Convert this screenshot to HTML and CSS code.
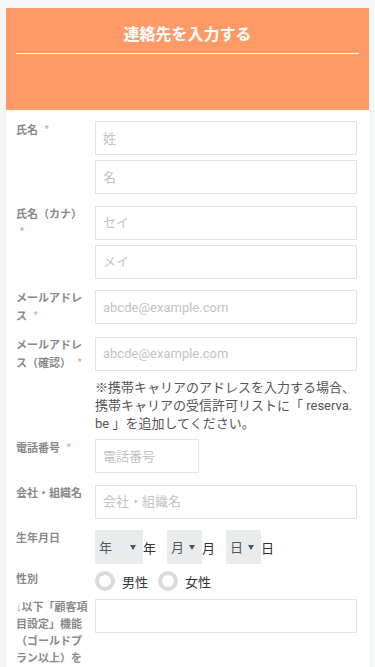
FILE: index.html
```html
<!DOCTYPE html>
<html lang="ja">
<head>
<meta charset="utf-8">
<meta name="viewport" content="width=device-width, initial-scale=1">
<title>連絡先を入力する</title>
<link rel="stylesheet" href="styles.css">
</head>
<body>
<div class="card">
  <div class="header">
    <h1 class="title">連絡先を入力する</h1>
  </div>
  <form class="form">
    <div class="row">
      <div class="label">氏名 <span class="req">*</span></div>
      <div class="fields">
        <input class="input" type="text" placeholder="姓">
        <input class="input" type="text" placeholder="名">
      </div>
    </div>
    <div class="row">
      <div class="label">氏名（カナ） <span class="req">*</span></div>
      <div class="fields">
        <input class="input" type="text" placeholder="セイ">
        <input class="input" type="text" placeholder="メイ">
      </div>
    </div>
    <div class="row">
      <div class="label">メールアドレス <span class="req">*</span></div>
      <div class="fields">
        <input class="input" type="email" placeholder="abcde@example.com">
      </div>
    </div>
    <div class="row row-note">
      <div class="label">メールアドレス（確認） <span class="req">*</span></div>
      <div class="fields">
        <input class="input" type="email" placeholder="abcde@example.com">
        <p class="note">※携帯キャリアのアドレスを入力する場合、携帯キャリアの受信許可リストに「 reserva.be 」を追加してください。</p>
      </div>
    </div>
    <div class="row">
      <div class="label">電話番号 <span class="req">*</span></div>
      <div class="fields">
        <input class="input input-tel" type="tel" placeholder="電話番号">
      </div>
    </div>
    <div class="row">
      <div class="label">会社・組織名</div>
      <div class="fields">
        <input class="input" type="text" placeholder="会社・組織名">
      </div>
    </div>
    <div class="row row-birth">
      <div class="label">生年月日</div>
      <div class="birth">
        <span class="sel sel-year"><select><option>年</option></select><svg class="arrow" viewBox="0 0 6 5" width="6" height="5"><path d="M0 0H6L3 5Z" fill="#555"/></svg></span><span class="unit">年</span>
        <span class="sel"><select><option>月</option></select><svg class="arrow" viewBox="0 0 6 5" width="6" height="5"><path d="M0 0H6L3 5Z" fill="#555"/></svg></span><span class="unit">月</span>
        <span class="sel"><select><option>日</option></select><svg class="arrow" viewBox="0 0 6 5" width="6" height="5"><path d="M0 0H6L3 5Z" fill="#555"/></svg></span><span class="unit">日</span>
      </div>
    </div>
    <div class="row row-gender">
      <div class="label">性別</div>
      <div class="radios">
        <label class="radio"><input type="radio" name="gender"><span>男性</span></label>
        <label class="radio"><input type="radio" name="gender"><span>女性</span></label>
      </div>
    </div>
    <div class="row">
      <div class="label"><span class="arrow-glyph">↓</span>以下「顧客項目設定」機能（ゴールドプラン以上）を使って追加した項目です</div>
      <div class="fields">
        <input class="input" type="text">
      </div>
    </div>
  </form>
</div>
</body>
</html>
```
FILE: styles.css
```css
* { box-sizing: border-box; }

html, body {
  margin: 0;
  padding: 0;
  background: #f5f6f8;
  font-family: Roboto, "Noto Sans CJK JP", sans-serif;
  color: #333;
}

.card {
  margin: 8px 6px 0;
  background: #fff;
  min-height: 700px;
}

.header {
  background: #ff9966;
  height: 102px;
  padding: 0 10px;
}

.title {
  margin: 0;
  padding: 16px 0 7px;
  line-height: 22px;
  font-size: 16px;
  font-weight: bold;
  color: #fff;
  text-align: center;
  border-bottom: 1px solid #fff;
}

.form {
  padding: 11px 12px 0 10px;
}

.row {
  display: grid;
  grid-template-columns: 72px 1fr;
  column-gap: 7px;
  margin-bottom: 11.5px;
}

.label {
  font-size: 11px;
  line-height: 17px;
  font-weight: bold;
  color: #8a8a8a;
}

.arrow-glyph {
  font-family: "Liberation Sans", sans-serif;
  font-weight: normal;
}

.req {
  color: #f29a74;
  font-size: 9px;
  margin-left: 4px;
  vertical-align: 2px;
}

.fields {
  display: flex;
  flex-direction: column;
  gap: 5px;
}

.input {
  display: block;
  width: 100%;
  height: 34px;
  margin: 0;
  padding: 0 7px;
  border: 1px solid #dfe4e8;
  border-radius: 0;
  background: #fff;
  font-family: Roboto, "Noto Sans CJK JP", sans-serif;
  font-size: 13px;
  color: #333;
  outline: none;
}

.input::placeholder {
  color: #c3c3c3;
}

.input-tel {
  width: 104px;
}

.note {
  margin: 3px 0 -5px;
  font-size: 13px;
  line-height: 18px;
  color: #555;
  word-break: break-all;
}

.row-birth {
  margin-bottom: 7px;
}

.birth {
  display: flex;
  align-items: center;
  height: 34px;
}

.sel {
  position: relative;
  display: inline-block;
  width: 35px;
  height: 34px;
  background: #e9ecee;
}

.sel-year {
  width: 48px;
}

.sel select {
  appearance: none;
  -webkit-appearance: none;
  width: 100%;
  height: 100%;
  margin: 0;
  padding: 0 0 0 4px;
  border: none;
  background: transparent;
  font-family: Roboto, "Noto Sans CJK JP", sans-serif;
  font-size: 13px;
  color: #555;
}

.arrow {
  position: absolute;
  right: 7px;
  top: 15px;
  pointer-events: none;
}

.unit {
  font-size: 13px;
  color: #333;
  margin-right: 11px;
}

.row-gender {
  margin-bottom: 8px;
}

.radios {
  display: flex;
  align-items: center;
  gap: 10px;
  height: 20px;
}

.radio {
  display: flex;
  align-items: center;
  gap: 7px;
  font-size: 13px;
  color: #333;
}

.radio input {
  appearance: none;
  -webkit-appearance: none;
  width: 20px;
  height: 20px;
  margin: 0;
  border: 4px solid #d8dcdf;
  border-radius: 50%;
  background: #fff;
}
```
